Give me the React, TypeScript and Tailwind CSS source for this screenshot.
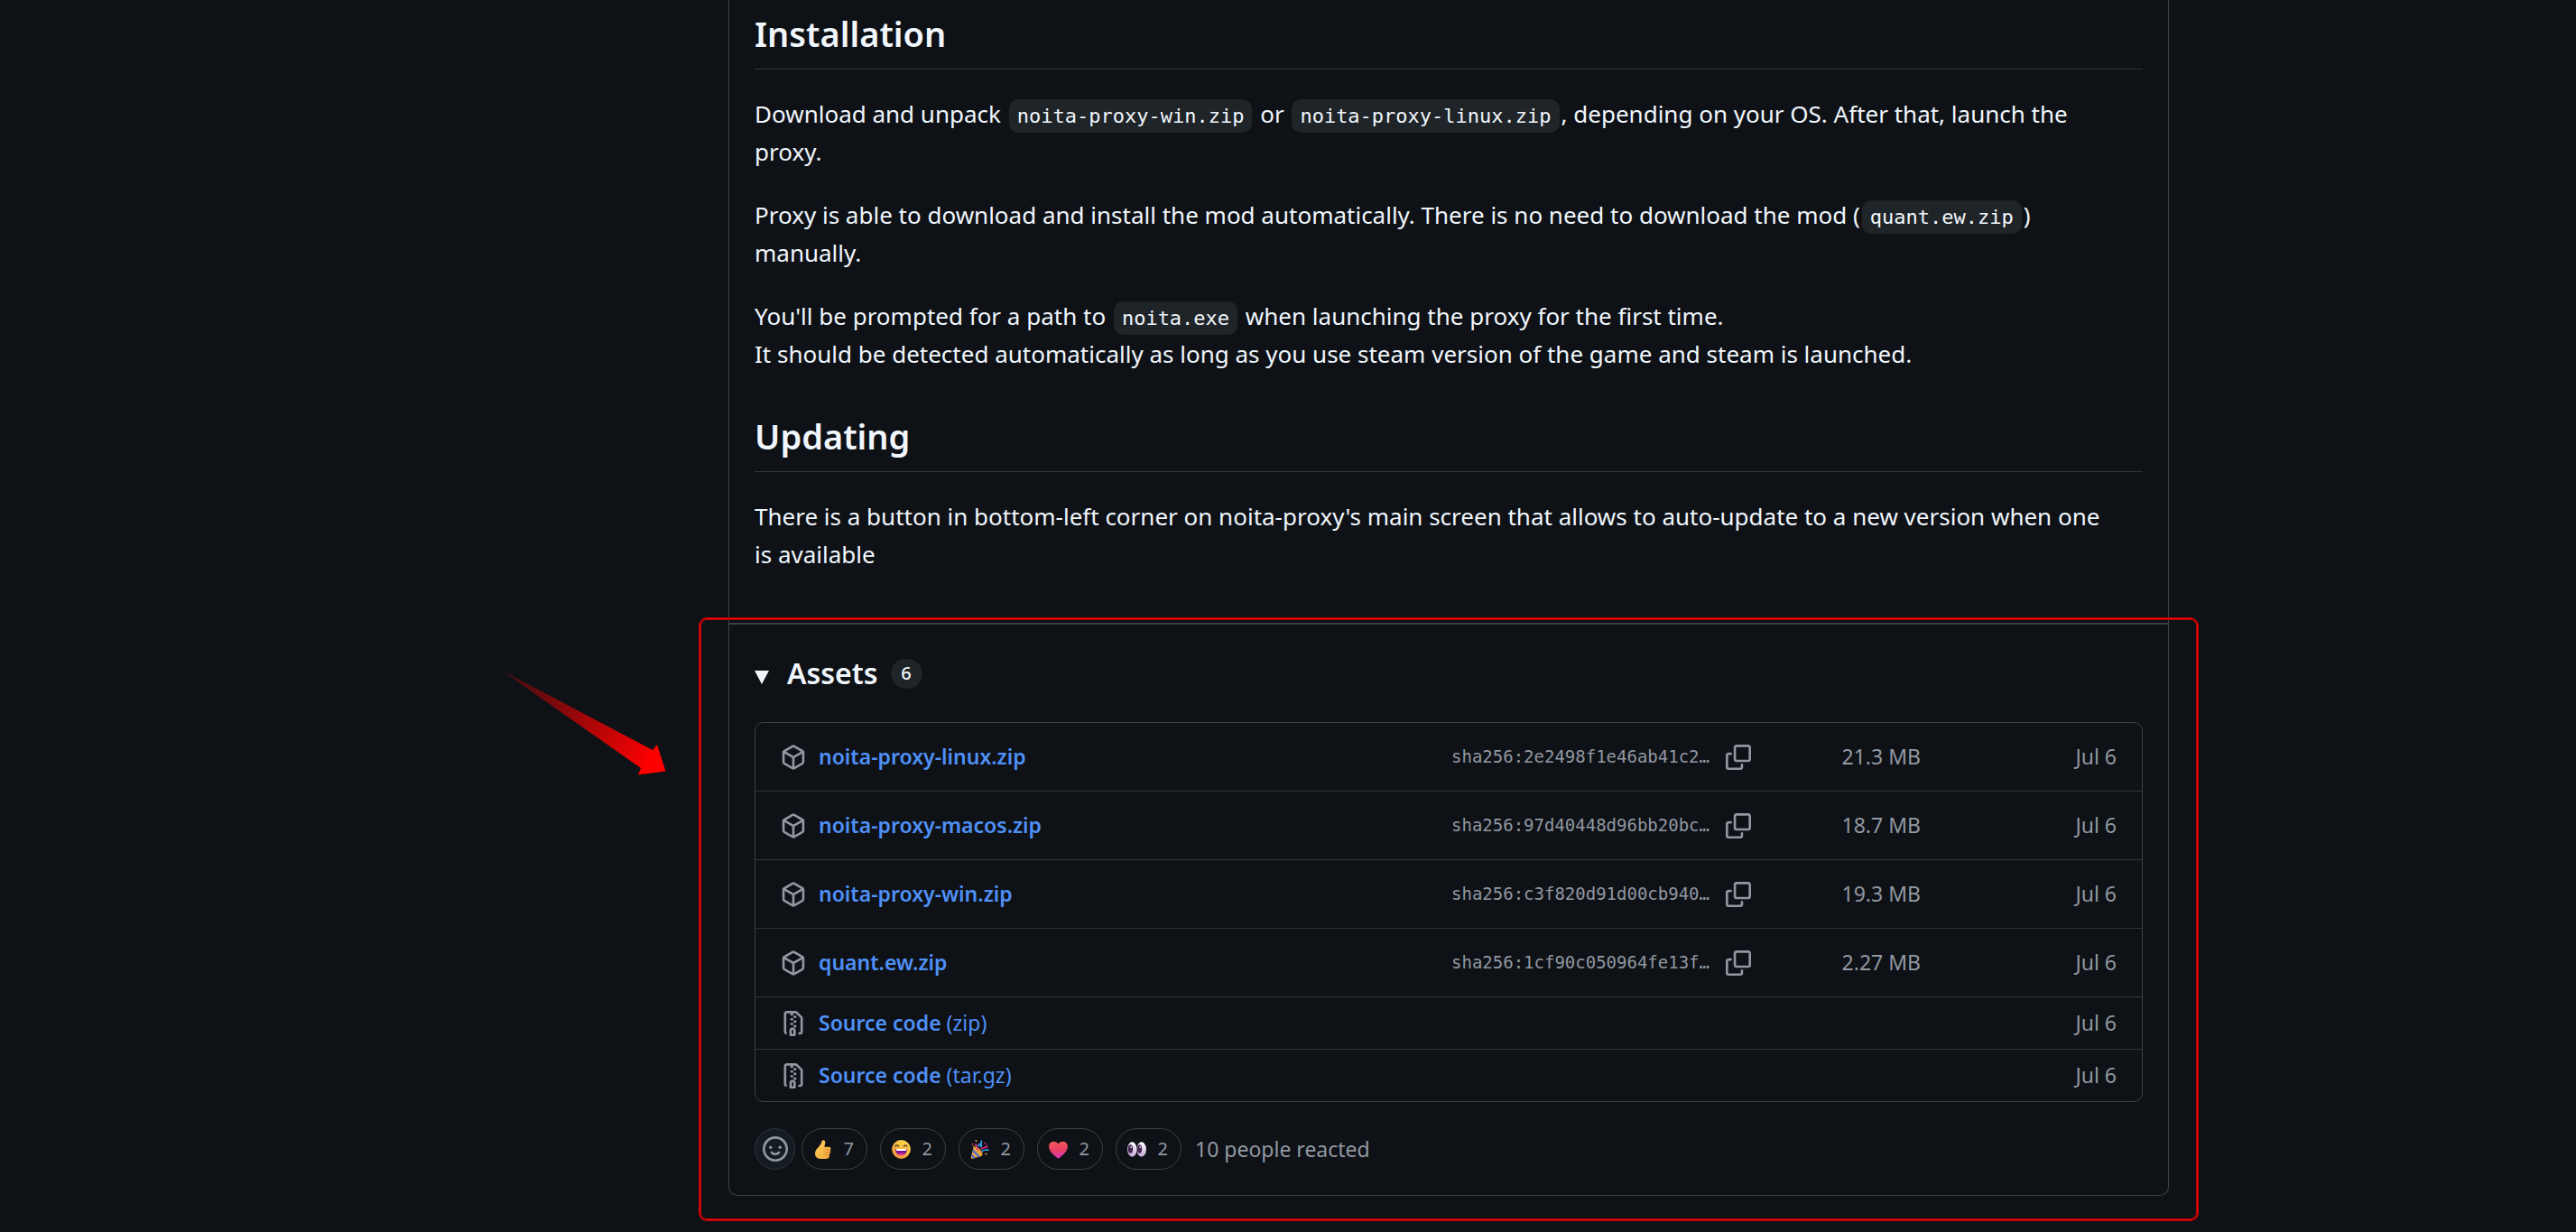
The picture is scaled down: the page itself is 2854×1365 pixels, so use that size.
import type { ReactNode } from 'react';

const iconPaths = {
  package:
    'M8.878.392l5.25 3.045c.54.314.872.89.872 1.514v6.098a1.75 1.75 0 0 1-.872 1.514l-5.25 3.045a1.75 1.75 0 0 1-1.756 0l-5.25-3.045A1.75 1.75 0 0 1 1 11.049V4.951c0-.624.332-1.201.872-1.514L7.122.392a1.75 1.75 0 0 1 1.756 0ZM7.875 1.69l-4.63 2.685L8 7.133l4.755-2.758-4.63-2.685a.248.248 0 0 0-.25 0ZM2.5 5.677v5.372c0 .09.047.171.125.216l4.625 2.683V8.432Zm6.25 8.271 4.625-2.683a.25.25 0 0 0 .125-.216V5.677L8.75 8.432Z',
  zip: 'M3.5 1.75v11.5c0 .09.048.173.126.217a.75.75 0 0 1-.752 1.298A1.748 1.748 0 0 1 2 13.25V1.75C2 .784 2.784 0 3.75 0h5.586c.464 0 .909.185 1.237.513l2.914 2.914c.329.328.513.773.513 1.237v8.586A1.75 1.75 0 0 1 12.25 15h-.5a.75.75 0 0 1 0-1.5h.5a.25.25 0 0 0 .25-.25V4.664a.25.25 0 0 0-.073-.177L9.513 1.573a.25.25 0 0 0-.177-.073H7.25a.75.75 0 0 1 0 1.5h-.5a.75.75 0 0 1 0-1.5h-3a.25.25 0 0 0-.25.25Zm3.75 8.75h.5c.966 0 1.75.784 1.75 1.75v3a.75.75 0 0 1-.75.75h-2.5a.75.75 0 0 1-.75-.75v-3c0-.966.784-1.75 1.75-1.75ZM6 5.25a.75.75 0 0 1 .75-.75h.5a.75.75 0 0 1 0 1.5h-.5A.75.75 0 0 1 6 5.25Zm.75 2.25h.5a.75.75 0 0 1 0 1.5h-.5a.75.75 0 0 1 0-1.5ZM8 6.75A.75.75 0 0 1 8.75 6h.5a.75.75 0 0 1 0 1.5h-.5A.75.75 0 0 1 8 6.75ZM8.75 3h.5a.75.75 0 0 1 0 1.5h-.5a.75.75 0 0 1 0-1.5ZM8 9.75A.75.75 0 0 1 8.75 9h.5a.75.75 0 0 1 0 1.5h-.5A.75.75 0 0 1 8 9.75Zm-1 2.5v2.25h1v-2.25a.25.25 0 0 0-.25-.25h-.5a.25.25 0 0 0-.25.25Z',
  copy: 'M0 6.75C0 5.784.784 5 1.75 5h1.5a.75.75 0 0 1 0 1.5h-1.5a.25.25 0 0 0-.25.25v7.5c0 .138.112.25.25.25h7.5a.25.25 0 0 0 .25-.25v-1.5a.75.75 0 0 1 1.5 0v1.5A1.75 1.75 0 0 1 9.25 16h-7.5A1.75 1.75 0 0 1 0 14.25ZM5 1.75C5 .784 5.784 0 6.75 0h7.5C15.216 0 16 .784 16 1.75v7.5A1.75 1.75 0 0 1 14.25 11h-7.5A1.75 1.75 0 0 1 5 9.25Zm1.75-.25a.25.25 0 0 0-.25.25v7.5c0 .138.112.25.25.25h7.5a.25.25 0 0 0 .25-.25v-7.5a.25.25 0 0 0-.25-.25Z',
};

function Icon({ name }: { name: keyof typeof iconPaths }) {
  return (
    <svg viewBox="0 0 16 16" className="size-7 shrink-0 fill-[#9198a1]" aria-hidden="true">
      <path d={iconPaths[name]} />
    </svg>
  );
}

function Smiley() {
  return (
    <svg viewBox="0 0 16 16" className="size-7 text-[#9198a1]" fill="none" stroke="currentColor" aria-hidden="true">
      <circle cx="8" cy="8" r="7.25" strokeWidth="1.5" />
      <path d="M5.75 10.25S6.4 11.25 8 11.25s2.25-1 2.25-1" strokeWidth="1.5" strokeLinecap="round" />
      <circle cx="5" cy="7" r="1" fill="currentColor" stroke="none" />
      <circle cx="11" cy="7" r="1" fill="currentColor" stroke="none" />
    </svg>
  );
}

function ThumbsUp() {
  return (
    <svg viewBox="0 0 21 21" className="size-[21px]" aria-hidden="true">
      <defs>
        <linearGradient id="thumb" x1="0" y1="0" x2="1" y2="1">
          <stop offset="0" stopColor="#ffd45c" />
          <stop offset="1" stopColor="#f0a33c" />
        </linearGradient>
      </defs>
      <path d="M10.600 .3c1.700-.6 2.900.7 2.700 2.600-.1 1.600-.8 3.200-1 4.900h5.200c1.300 0 2 .9 1.900 2 0 .5-.2.900-.5 1.200.3.400.4.900.3 1.400-.1.500-.3.900-.7 1.200.2.400.3.800.2 1.300-.1.500-.4.900-.8 1.200.1.300.2.700.1 1.100-.2 2.200-1.100 3.300-2.700 3.500-2.600.4-6.700.4-9 0C3.600 20.100 2 18.100 2 15.200c0-3 1.300-4.900 3.300-6.700C7.500 6.500 9 3.900 9.500 1.600c.1-.6.500-1.100 1.100-1.300Z" fill="url(#thumb)" />
      <path d="M13.300 11h5.300M13.100 13.900h5.200M13 16.600h4.600" stroke="#d08332" strokeWidth=".8" strokeLinecap="round" />
    </svg>
  );
}

function Laughing() {
  return (
    <svg viewBox="0 0 21 21" className="size-[21px]" aria-hidden="true">
      <defs>
        <linearGradient id="face" x1=".8" y1="0" x2=".2" y2="1">
          <stop offset="0" stopColor="#ffe04d" />
          <stop offset="1" stopColor="#f08c3a" />
        </linearGradient>
      </defs>
      <circle cx="10.500" cy="10.500" r="10.400" fill="url(#face)" />
      <path d="M4 7.200c.6-1.800 3-1.800 3.600 0M13.400 7.200c.6-1.800 3-1.800 3.600 0" fill="none" stroke="#49311f" strokeWidth="1.200" strokeLinecap="round" />
      <path d="M4.200 10h12.600c.3 4-2.400 7-6.300 7s-6.600-3-6.300-7Z" fill="#7d1394" />
      <path d="M5 10h11v1.300c0 .5-.3.800-.8.800H5.800c-.5 0-.8-.3-.8-.8Z" fill="#fff" />
      <path d="M6.500 15.500c2-1.700 6-1.700 8 0-1 1-2.400 1.500-4 1.500s-3-.5-4-1.500Z" fill="#d0309a" />
    </svg>
  );
}

function Party() {
  return (
    <svg viewBox="0 0 21 21" className="size-[21px]" aria-hidden="true">
      <path d="M5 7.500 13.300 16c.4 1-.3 1.500-1.200 1.900L2.500 20.700c-1.200.4-2-.4-1.700-1.500L3.400 9c.3-1 .8-1.700 1.600-1.500Z" fill="#f6a93b" />
      <path d="m3.200 10.200 8 8.100-2.700.8-6.100-6.200ZM1.800 15.600l4.200 4.200-2.500.7-2.400-2.400Z" fill="#4f6fd0" />
      <ellipse cx="9.200" cy="11.700" rx="2" ry="5.800" transform="rotate(-45 9.200 11.700)" fill="#e59a3c" />
      <path d="M9.300 6.500c-.8-2 2.600-3.200 3-.4.300 2-1.200 1.700-.7-.4.300-1.600.8-3 .8-4.700M13.500 12.300c1.600-1.900 4-1.400 6.500-1.100" fill="none" stroke="#35a5f5" strokeWidth="1.600" strokeLinecap="round" />
      <path d="M8 10.800c-.2-2.200-.9-4.300-2.300-6M12.300 9.800c1.400-1.400 2.200-.4 3.300-1.200 1.100-.9 1.900-1.100 3.400-.9" fill="none" stroke="#e8308f" strokeWidth="1.600" strokeLinecap="round" />
      <g fill="#e8308f">
        <circle cx="2.400" cy="4.700" r=".9" />
        <circle cx="15.900" cy="3.600" r=".9" />
        <circle cx="18" cy="5" r=".8" />
      </g>
      <g fill="#f5b83d">
        <circle cx="6.500" cy="1" r=".9" />
        <circle cx="17.500" cy="15.600" r="1" />
        <circle cx="3.300" cy="7" r=".7" />
      </g>
    </svg>
  );
}

function Heart() {
  return (
    <svg viewBox="0 0 21 21" className="size-[21px]" aria-hidden="true">
      <defs>
        <linearGradient id="heart" x1=".4" y1="0" x2=".5" y2="1">
          <stop offset="0" stopColor="#f4595a" />
          <stop offset=".5" stopColor="#ea3f62" />
          <stop offset="1" stopColor="#d83ab8" />
        </linearGradient>
      </defs>
      <path d="M10.500 4.600C12 2.300 14 1.700 15.900 1.800c2.900.1 5 2.400 5 5.500 0 5.200-5.500 9.700-9 12.400-.9.700-1.900.7-2.800 0C5.600 17 .1 12.500.1 7.300c0-3.100 2.100-5.400 5-5.500 1.900-.1 3.900.5 5.400 2.800Z" fill="url(#heart)" />
    </svg>
  );
}

function Eyes() {
  return (
    <svg viewBox="0 0 21 21" className="size-[21px]" aria-hidden="true">
      <defs>
        <linearGradient id="eye" x1=".6" y1="0" x2=".4" y2="1">
          <stop offset="0" stopColor="#ffffff" />
          <stop offset="1" stopColor="#c3a5d8" />
        </linearGradient>
      </defs>
      <ellipse cx="5.300" cy="10.500" rx="5.200" ry="8.300" fill="url(#eye)" />
      <ellipse cx="15.700" cy="10.500" rx="5.200" ry="8.300" fill="url(#eye)" />
      <ellipse cx="3.500" cy="10" rx="2.700" ry="4.800" fill="#43294f" />
      <ellipse cx="13.500" cy="10" rx="2.700" ry="4.800" fill="#43294f" />
      <circle cx="4.200" cy="8" r="1" fill="#d9c9e2" />
      <circle cx="14.200" cy="8" r="1" fill="#d9c9e2" />
    </svg>
  );
}

function Code({ children }: { children: ReactNode }) {
  return (
    <code className="mx-[2px] rounded-[10px] bg-[#1f2428] px-[9px] py-[6px] font-['DejaVu_Sans_Mono',monospace] text-[22px] leading-[26px]">
      {children}
    </code>
  );
}

function Heading({ children }: { children: ReactNode }) {
  return (
    <h2 className="border-b border-[#303439] pb-3 text-[38px] leading-[54px] font-semibold">{children}</h2>
  );
}

const files = [
  { name: 'noita-proxy-linux.zip', hash: 'sha256:2e2498f1e46ab41c2…', size: '21.3 MB' },
  { name: 'noita-proxy-macos.zip', hash: 'sha256:97d40448d96bb20bc…', size: '18.7 MB' },
  { name: 'noita-proxy-win.zip', hash: 'sha256:c3f820d91d00cb940…', size: '19.3 MB' },
  { name: 'quant.ew.zip', hash: 'sha256:1cf90c050964fe13f…', size: '2.27 MB' },
];

const sources = ['(zip)', '(tar.gz)'];

const reactions = [
  { label: 'thumbs up', count: 7, icon: <ThumbsUp /> },
  { label: 'laugh', count: 2, icon: <Laughing /> },
  { label: 'hooray', count: 2, icon: <Party /> },
  { label: 'heart', count: 2, icon: <Heart /> },
  { label: 'eyes', count: 2, icon: <Eyes /> },
];

function Arrow() {
  return (
    <svg viewBox="0 0 190 122" className="absolute top-[54px] right-full mr-[36px] w-[190px]" aria-hidden="true">
      <defs>
        <linearGradient id="arrow" gradientUnits="userSpaceOnUse" x1="4" y1="2" x2="172" y2="104">
          <stop offset="0" stopColor="#ff0000" stopOpacity="0.15" />
          <stop offset="1" stopColor="#ff0000" />
        </linearGradient>
      </defs>
      <path d="M3 1 173 91l5-6 9.500 29.500L157 118.500l3-7.500Z" fill="url(#arrow)" />
    </svg>
  );
}

export default function App() {
  return (
    <div className="min-h-screen overflow-x-hidden bg-[#0e1116] font-['Noto_Sans','Open_Sans',sans-serif] text-[#f0f6fc]">
      <div className="mx-auto flex max-w-[1952px]">
        <div className="w-[356px] shrink-0" />
        <main className="mb-10 min-w-0 flex-1 rounded-b-[10px] border-x border-b border-[#3d4248]">
          <article className="px-7 pt-[10px] pb-[55px] text-[26px] leading-[42px]">
            <Heading>Installation</Heading>
            <div className="mt-7 mb-[43px] space-y-7">
              <p>
                Download and unpack <Code>noita-proxy-win.zip</Code> or <Code>noita-proxy-linux.zip</Code>, depending on
                your OS. After that, launch the
                <br />
                proxy.
              </p>
              <p>
                Proxy is able to download and install the mod automatically. There is no need to download the mod (
                <Code>quant.ew.zip</Code>)
                <br />
                manually.
              </p>
              <p>
                You'll be prompted for a path to <Code>noita.exe</Code> when launching the proxy for the first time.
                <br />
                It should be detected automatically as long as you use steam version of the game and steam is launched.
              </p>
            </div>
            <Heading>Updating</Heading>
            <p className="mt-7">
              There is a button in bottom-left corner on noita-proxy's main screen that allows to auto-update to a new
              version when one
              <br />
              is available
            </p>
          </article>

          <section className="relative border-t-2 border-[#3d4248] p-7 text-[23px]">
            <details open>
              <summary className="mb-7 flex list-none items-center leading-[52px]">
                <svg viewBox="0 0 16 15" className="mt-2 h-[15px] w-4 fill-current" aria-hidden="true">
                  <path d="M0 0h16L8 15Z" />
                </svg>
                <h3 className="ml-5 text-[32px] font-semibold">Assets</h3>
                <span className="ml-[14px] flex h-[33px] w-[35px] items-center justify-center rounded-full bg-[#1f2428] text-[20px] font-medium">
                  6
                </span>
              </summary>
              <ul className="divide-y divide-[#303439] rounded-[10px] border border-[#3d4248]">
                {files.map((file) => (
                  <li key={file.name}>
                    <div className="flex h-[75px] items-center px-7 text-[#9198a1]">
                      <Icon name="package" />
                      <a href="#" className="ml-[14px] flex-1 font-semibold text-[#4f90f6]">
                        {file.name}
                      </a>
                      <span className="font-['DejaVu_Sans_Mono',monospace] text-[19px]">{file.hash}</span>
                      <button type="button" aria-label={`Copy hash of ${file.name}`} className="ml-[18px]">
                        <Icon name="copy" />
                      </button>
                      <span className="w-[188px] text-right">{file.size}</span>
                      <span className="w-[217px] text-right">Jul 6</span>
                    </div>
                  </li>
                ))}
                {sources.map((kind) => (
                  <li key={kind}>
                    <div className="flex h-[57px] items-center px-7 text-[#9198a1]">
                      <Icon name="zip" />
                      <a href="#" className="ml-[14px] flex-1 text-[#4f90f6]">
                        <span className="font-semibold">Source code</span> {kind}
                      </a>
                      <span>Jul 6</span>
                    </div>
                  </li>
                ))}
              </ul>
            </details>

            <div className="mt-[29px] flex items-center text-[#9198a1]">
              <button
                type="button"
                aria-label="Add a reaction"
                className="mr-[7px] flex h-[46px] w-[45px] items-center justify-center rounded-full border border-[#303439] bg-[#151b23]"
              >
                <Smiley />
              </button>
              <div className="flex gap-[14px]">
                {reactions.map((reaction) => (
                  <button
                    key={reaction.label}
                    type="button"
                    aria-label={`${reaction.label} ${reaction.count}`}
                    className="flex h-[46px] w-[73px] items-center justify-between rounded-full border border-[#3d4248] pr-[14px] pl-3 text-[20px]"
                  >
                    {reaction.icon}
                    <span>{reaction.count}</span>
                  </button>
                ))}
              </div>
              <span className="ml-[15px]">10 people reacted</span>
            </div>

            <div className="pointer-events-none absolute -inset-x-[33px] -top-[7px] -bottom-[28px] rounded-lg border border-[#ff0000] shadow-[0_0_0_1px_#b00407,inset_0_0_0_1px_#b00407]">
              <Arrow />
            </div>
          </section>
        </main>
      </div>
    </div>
  );
}
